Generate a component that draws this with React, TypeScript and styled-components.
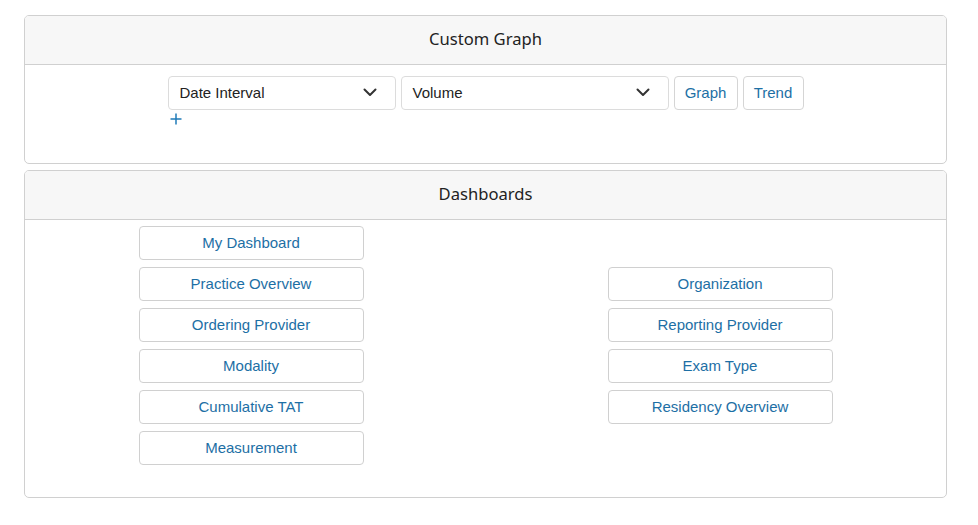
import React from 'react';
import styled, { createGlobalStyle } from 'styled-components';

const GlobalStyle = createGlobalStyle`
  html, body {
    margin: 0;
    padding: 0;
    background: #fff;
    font-family: "Liberation Sans", Arial, sans-serif;
  }
`;

const Page = styled.div`
  padding: 15px 31px 0 24px;
  display: flex;
  flex-direction: column;
  gap: 6px;
`;

const Panel = styled.section<{ height: number }>`
  border: 1px solid #d0d0d0;
  border-radius: 5px;
  height: ${({ height }) => height}px;
  box-sizing: border-box;
  overflow: hidden;
`;

const PanelHeader = styled.header`
  height: 49px;
  box-sizing: border-box;
  background: #f7f7f7;
  border-bottom: 1px solid #d0d0d0;
  display: flex;
  align-items: center;
  justify-content: center;
  font-family: "Noto Sans", "Open Sans", sans-serif;
  font-size: 16.6px;
  color: #222;
  padding-bottom: 4px;
`;

const GraphBody = styled.div`
  display: flex;
  justify-content: center;
  padding-top: 11px;
`;

const GraphGroup = styled.div`
  display: flex;
  flex-direction: column;
`;

const Row = styled.div`
  display: flex;
  gap: 5px;
`;

const Select = styled.div<{ width: number }>`
  width: ${({ width }) => width}px;
  height: 34px;
  box-sizing: border-box;
  border: 1px solid #dcdcdc;
  border-radius: 4px;
  display: flex;
  align-items: center;
  justify-content: space-between;
  padding: 0 18px 0 11px 
  ;
  font-size: 15px;
  color: #222;
  padding-bottom: 2px;
`;

const SmallButton = styled.button<{ width: number }>`
  width: ${({ width }) => width}px;
  height: 34px;
  border: 1px solid #d5d5d5;
  border-radius: 4px;
  background: #fff;
  color: #1d6fa5;
  font-family: "Liberation Sans", Arial, sans-serif;
  font-size: 15px;
  padding: 0 0 2px;
`;

const Plus = styled.span`
  display: flex;
  padding: 3px 0 0 2px;
`;

const DashGrid = styled.div`
  display: grid;
  grid-template-columns: 225px 225px;
  column-gap: 244px;
  justify-content: center;
  padding-top: 6px;
`;

const Column = styled.div<{ offset: number }>`
  display: flex;
  flex-direction: column;
  gap: 7px;
  padding-top: ${({ offset }) => offset}px;
`;

const DashButton = styled.button`
  height: 34px;
  box-sizing: border-box;
  border: 1px solid #d0d0d0;
  border-radius: 4px;
  background: #fff;
  color: #1d6fa5;
  font-family: "Liberation Sans", Arial, sans-serif;
  font-size: 15px;
  padding: 0 0 2px;
`;

const Chevron = () => (
  <svg width="14" height="9" viewBox="0 0 14 9">
    <path d="M1.5 1.5 L7 7 L12.5 1.5" fill="none" stroke="#333" strokeWidth="2" strokeLinecap="round" strokeLinejoin="round" />
  </svg>
);

const PlusIcon = () => (
  <svg width="12" height="12" viewBox="0 0 12 12">
    <path d="M6 0.5 V11.5 M0.5 6 H11.5" stroke="#1f7bb8" strokeWidth="1.5" />
  </svg>
);

const left = ['My Dashboard', 'Practice Overview', 'Ordering Provider', 'Modality', 'Cumulative TAT', 'Measurement'];
const right = ['Organization', 'Reporting Provider', 'Exam Type', 'Residency Overview'];

export default function App() {
  return (
    <>
      <GlobalStyle />
      <Page>
        <Panel height={149}>
          <PanelHeader>Custom Graph</PanelHeader>
          <GraphBody>
            <GraphGroup>
              <Row>
                <Select width={228}>
                  Date Interval
                  <Chevron />
                </Select>
                <Select width={268}>
                  Volume
                  <Chevron />
                </Select>
                <SmallButton width={64}>Graph</SmallButton>
                <SmallButton width={61}>Trend</SmallButton>
              </Row>
              <Plus>
                <PlusIcon />
              </Plus>
            </GraphGroup>
          </GraphBody>
        </Panel>
        <Panel height={328}>
          <PanelHeader>Dashboards</PanelHeader>
          <DashGrid>
            <Column offset={0}>
              {left.map((l) => (
                <DashButton key={l}>{l}</DashButton>
              ))}
            </Column>
            <Column offset={41}>
              {right.map((l) => (
                <DashButton key={l}>{l}</DashButton>
              ))}
            </Column>
          </DashGrid>
        </Panel>
      </Page>
    </>
  );
}
